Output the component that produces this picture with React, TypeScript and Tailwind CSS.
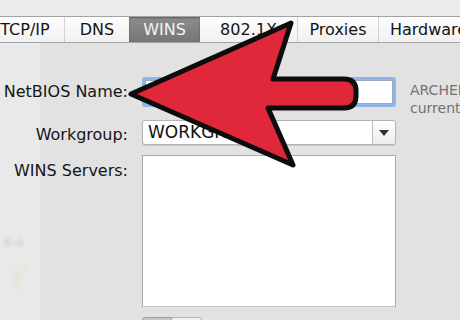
// Network preferences — WINS tab, with a big red pointer arrow on top.

const TABS = [
  { label: 'TCP/IP', w: 'w-[78px] -ml-[14px]' },
  { label: 'DNS', w: 'w-[65px]' },
  { label: 'WINS', w: 'w-[71px]', active: true },
  { label: '802.1X', w: 'w-[97px]' },
  { label: 'Proxies', w: 'w-[81px]' },
  { label: 'Hardware', w: 'w-[100px]' },
];

function TabBar() {
  return (
    <div className="flex h-[27px] border-y border-[#a3a3a3] bg-gradient-to-b from-[#fdfdfd] to-[#f1f1f1] shadow-[0_1px_0_#f4f4f4]">
      {TABS.map((t, i) => (
        <div
          key={t.label}
          className={`${t.w} shrink-0 flex items-center justify-center text-[16px] whitespace-nowrap ${
            t.active
              ? 'bg-gradient-to-b from-[#8c8c8c] to-[#767676] text-[#f4f4f4] shadow-[inset_0_1px_2px_rgba(0,0,0,0.35)]'
              : 'text-[#141414]'
          } ${i > 0 && !t.active && !TABS[i - 1].active ? 'border-l border-[#d2d2d2]' : ''}`}
        >
          {t.label}
        </div>
      ))}
    </div>
  );
}

function Arrow() {
  return (
    <svg className="absolute left-0 top-0 pointer-events-none" width="460" height="320" viewBox="0 0 460 320">
      <path
        d="M131,94 L291,23 L273,79 L344,79 Q356,79 356,91 L356,96 Q356,108 344,108 L268,108 L293,165 Z"
        fill="#e1283b"
        stroke="#0c0c0c"
        strokeWidth="5"
        strokeLinejoin="round"
      />
    </svg>
  );
}

export default function App() {
  return (
    <div className="relative w-[460px] h-[320px] overflow-hidden bg-[#ebebeb] font-['DejaVu_Sans',sans-serif]">
      <div className="h-[16px]" />
      <TabBar />

      <div className="relative h-[277px] bg-[linear-gradient(to_right,#e9e9e9_0,#e9e9e9_40px,#e2e2e2_41px)]">
        {/* faded sidebar icons of the window behind */}
        <div className="absolute left-[2px] top-[185px] opacity-20 blur-[1.5px] text-[#9a9a9a] text-[28px] leading-none">↔</div>
        <div className="absolute left-[6px] top-[215px] opacity-15 blur-[2px] text-[#e0c060] text-[38px] leading-none">Y</div>

        <div className="grid grid-cols-[128px_254px_auto] gap-x-[14px] pt-[34px] items-start">
          <div className="h-[30px] flex items-center justify-end text-[16px] text-[#151515] whitespace-nowrap">NetBIOS Name:</div>
          <div className="h-[30px] rounded-[3px] bg-[#8fb6e6] p-[3px]">
            <div className="h-full bg-white border border-[#9aa8bb]" />
          </div>
          <div className="h-[30px] pt-[4px] text-[14px] leading-[18px] text-[#727272] whitespace-nowrap">
            <div>ARCHER</div>
            <div>current</div>
          </div>

          <div className="mt-[13px] h-[25px] flex items-center justify-end text-[16px] text-[#151515] translate-y-[2px]">Workgroup:</div>
          <div className="mt-[13px] h-[25px] flex bg-white border border-[#b3b3b3] rounded-[3px] shadow-[0_1px_1px_rgba(0,0,0,0.12)]">
            <div className="flex-1 flex items-center pl-[5px] text-[17px] text-[#111]">WORKGROUP</div>
            <div className="w-[23px] flex items-center justify-center border-l border-[#bdbdbd] bg-gradient-to-b from-white to-[#ededed] rounded-r-[3px]">
              <div className="w-0 h-0 border-x-[5px] border-x-transparent border-t-[6px] border-t-[#333]" />
            </div>
          </div>
          <div />

          <div className="mt-[10px] pt-[4px] text-[16px] text-[#151515] text-right">WINS Servers:</div>
          <div className="mt-[10px] h-[152px] bg-white border border-[#a9a9a9] border-b-[#c2c2c2]" />
          <div />

          <div />
          <div className="mt-[10px] flex">
            <div className="w-[30px] h-[20px] border border-[#9c9c9c] rounded-l-[3px] bg-gradient-to-b from-[#c8c8c8] to-[#bdbdbd]" />
            <div className="w-[30px] h-[20px] border border-l-0 border-[#b5b5b5] rounded-r-[3px] bg-gradient-to-b from-[#f2f2f2] to-[#e5e5e5]" />
          </div>
          <div />
        </div>
      </div>

      <Arrow />
    </div>
  );
}
